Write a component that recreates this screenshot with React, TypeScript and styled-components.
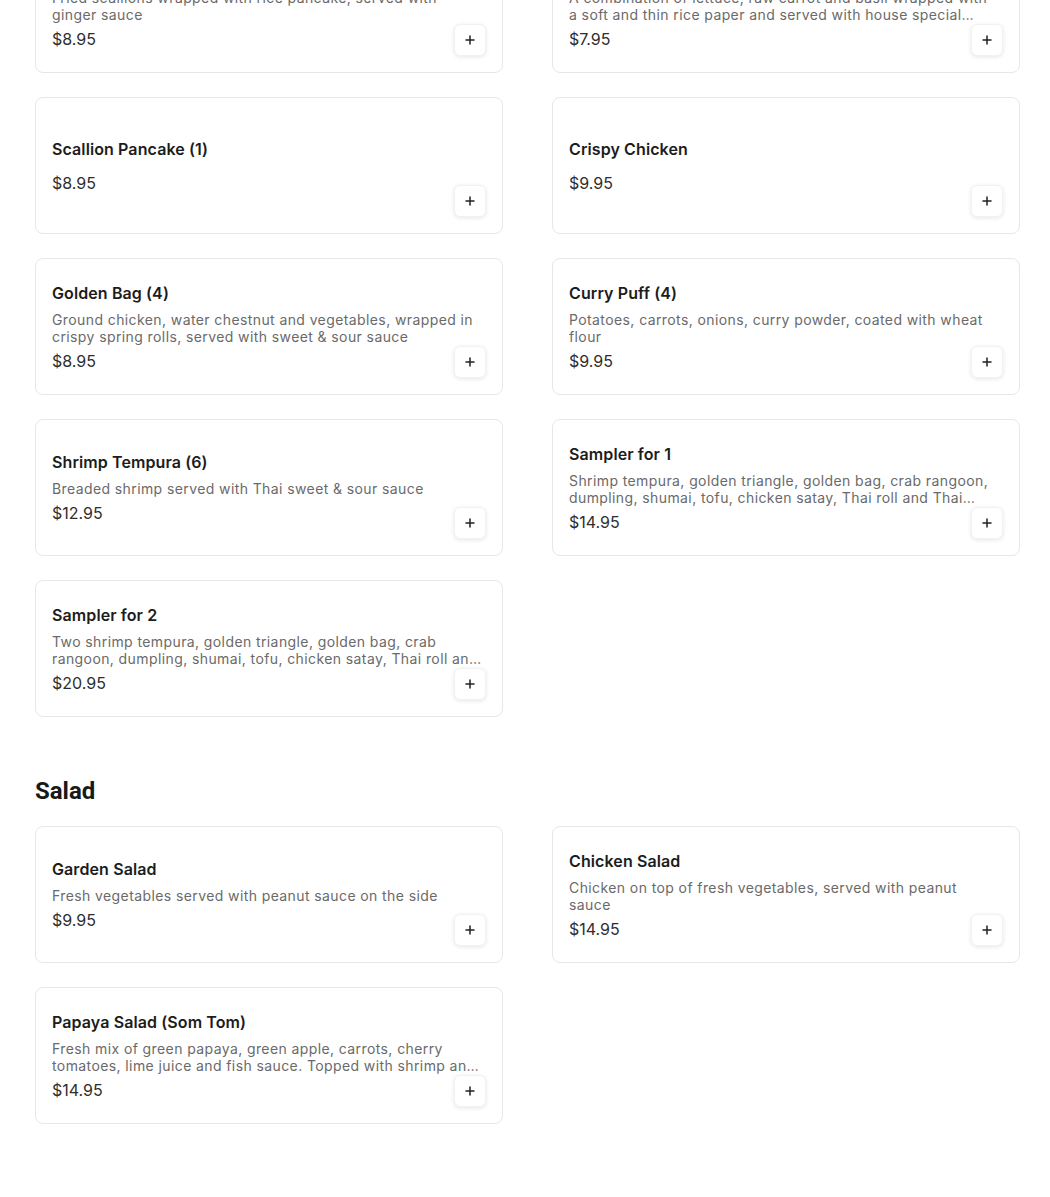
import React from "react";
import styled, { createGlobalStyle } from "styled-components";

const GlobalStyle = createGlobalStyle`
  html, body { margin: 0; padding: 0; background: #ffffff; }
  body { font-family: "Inter", "Noto Sans", sans-serif; color: #191919; overflow: hidden; }
  * { box-sizing: border-box; }
`;

type Item = { name: string; desc?: string; price: string };

const appetizers: Item[] = [
  { name: "Scallion Pancakes", desc: "Fried scallions wrapped with rice pancake, served with ginger sauce", price: "$8.95" },
  { name: "Fresh Roll (2)", desc: "A combination of lettuce, raw carrot and basil wrapped with a soft and thin rice paper and served with house special peanut sauce", price: "$7.95" },
  { name: "Scallion Pancake (1)", price: "$8.95" },
  { name: "Crispy Chicken", price: "$9.95" },
  { name: "Golden Bag (4)", desc: "Ground chicken, water chestnut and vegetables, wrapped in crispy spring rolls, served with sweet & sour sauce", price: "$8.95" },
  { name: "Curry Puff (4)", desc: "Potatoes, carrots, onions, curry powder, coated with wheat flour", price: "$9.95" },
  { name: "Shrimp Tempura (6)", desc: "Breaded shrimp served with Thai sweet & sour sauce", price: "$12.95" },
  { name: "Sampler for 1", desc: "Shrimp tempura, golden triangle, golden bag, crab rangoon, dumpling, shumai, tofu, chicken satay, Thai roll and Thai spring roll", price: "$14.95" },
  { name: "Sampler for 2", desc: "Two shrimp tempura, golden triangle, golden bag, crab rangoon, dumpling, shumai, tofu, chicken satay, Thai roll and Thai spring roll", price: "$20.95" },
];

const salads: Item[] = [
  { name: "Garden Salad", desc: "Fresh vegetables served with peanut sauce on the side", price: "$9.95" },
  { name: "Chicken Salad", desc: "Chicken on top of fresh vegetables, served with peanut sauce", price: "$14.95" },
  { name: "Papaya Salad (Som Tom)", desc: "Fresh mix of green papaya, green apple, carrots, cherry tomatoes, lime juice and fish sauce. Topped with shrimp and peanuts", price: "$14.95" },
];

const Page = styled.main`
  width: 985px;
  margin: -64px 0 0 35px;
  padding-bottom: 74px;
`;

const Section = styled.section`
  & + & { margin-top: 60px; }
`;

const SectionTitle = styled.h2`
  margin: 0 0 21px;
  font-family: "Roboto", "Liberation Sans", sans-serif;
  font-weight: 700;
  font-size: 24px;
  line-height: 28px;
  color: #191919;
`;

const Grid = styled.div`
  display: grid;
  grid-template-columns: 468px 468px;
  column-gap: 49px;
  row-gap: 24px;
`;

const Card = styled.article`
  position: relative;
  height: 137px;
  display: flex;
  align-items: center;
  padding: 0 16px;
  background: #ffffff;
  border: 1px solid #e7e7e7;
  border-radius: 8px;
`;

const Info = styled.div`
  display: flex;
  flex-direction: column;
  width: 430px;
`;

const Name = styled.h3`
  margin: 0;
  font-size: 16px;
  line-height: 20px;
  font-weight: 600;
  letter-spacing: 0.1px;
  color: #1c1c1c;
`;

const Desc = styled.p`
  margin: 8px 0 0;
  font-size: 14px;
  line-height: 17px;
  letter-spacing: 0.4px;
  color: #6a6a6a;
  display: -webkit-box;
  -webkit-line-clamp: 2;
  -webkit-box-orient: vertical;
  overflow: hidden;
`;

const Price = styled.span<{ $tight?: boolean }>`
  margin-top: ${(p) => (p.$tight ? "14px" : "6px")};
  font-size: 16px;
  line-height: 20px;
  font-weight: 400;
  color: #2e2e2e;
`;

const AddButton = styled.button`
  position: absolute;
  right: 16px;
  bottom: 16px;
  width: 32px;
  height: 32px;
  padding: 0;
  display: flex;
  align-items: center;
  justify-content: center;
  background: #ffffff;
  border: 1px solid #f2f2f2;
  border-radius: 6px;
  box-shadow: 0 1px 4px rgba(0, 0, 0, 0.1);
  color: #222;
  cursor: pointer;
`;

const PlusIcon = () => (
  <svg width="10" height="10" viewBox="0 0 10 10" fill="none" stroke="currentColor" strokeWidth="1.5" strokeLinecap="round">
    <path d="M5 1v8M1 5h8" />
  </svg>
);

const MenuCard: React.FC<{ item: Item }> = ({ item }) => (
  <Card>
    <Info>
      <Name>{item.name}</Name>
      {item.desc && <Desc>{item.desc}</Desc>}
      <Price $tight={!item.desc}>{item.price}</Price>
    </Info>
    <AddButton aria-label={`Add ${item.name}`}>
      <PlusIcon />
    </AddButton>
  </Card>
);

export default function App() {
  return (
    <>
      <GlobalStyle />
      <Page>
        <Section>
          <Grid>
            {appetizers.map((it) => (
              <MenuCard key={it.name} item={it} />
            ))}
          </Grid>
        </Section>
        <Section>
          <SectionTitle>Salad</SectionTitle>
          <Grid>
            {salads.map((it) => (
              <MenuCard key={it.name} item={it} />
            ))}
          </Grid>
        </Section>
      </Page>
    </>
  );
}
